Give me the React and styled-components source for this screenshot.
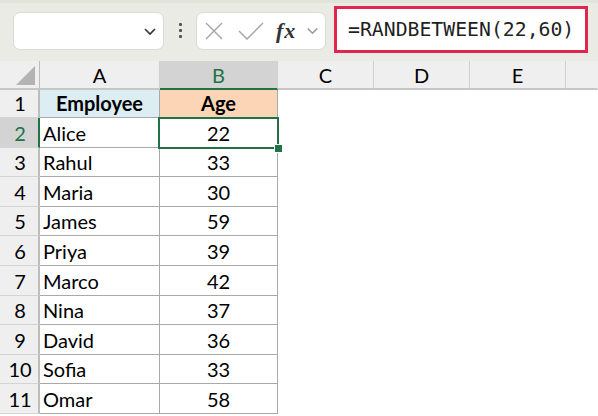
import React from 'react'
import styled, { createGlobalStyle } from 'styled-components'

const GlobalStyle = createGlobalStyle`
  html, body {
    margin: 0;
    padding: 0;
    background: #ffffff;
  }
  body {
    width: 598px;
    height: 416px;
    overflow: hidden;
  }
`

const GREEN = '#217346'

const Page = styled.div`
  width: 598px;
  height: 416px;
  display: flex;
  flex-direction: column;
  background: #ffffff;
  font-family: Lato, 'Liberation Sans', sans-serif;
`

const Toolbar = styled.div`
  height: 61px;
  box-sizing: border-box;
  background: #e9ebe4;
  border-top: 3px solid #e2e4dc;
  display: flex;
  align-items: center;
  padding: 0 10px 0 13px;
`

const NameBox = styled.div`
  width: 151px;
  height: 38px;
  box-sizing: border-box;
  margin-top: -3px;
  background: #ffffff;
  border: 1px solid #d9dbd4;
  border-radius: 7px;
  display: flex;
  align-items: center;
  justify-content: flex-end;
  padding-right: 6px;
`

const Dots = styled.div`
  width: 32px;
  display: flex;
  flex-direction: column;
  align-items: center;
  gap: 3px;
  margin-top: -3px;

  & span {
    width: 3px;
    height: 3px;
    border-radius: 1px;
    background: #555;
  }
`

const FxBox = styled.div`
  width: 130px;
  height: 38px;
  box-sizing: border-box;
  margin-top: -3px;
  background: #ffffff;
  border: 1px solid #d9dbd4;
  border-radius: 7px;
  display: flex;
  align-items: center;
  padding-left: 7px;
  gap: 14px;
`

const Fx = styled.span`
  font-family: 'Liberation Serif', serif;
  font-style: italic;
  font-weight: bold;
  font-size: 22px;
  color: #333;
  margin-left: -2px;
  margin-right: -4px;
  letter-spacing: 1px;
`

const FormulaBox = styled.div`
  flex: 1;
  height: 47px;
  box-sizing: border-box;
  margin-left: 8px;
  margin-top: -5px;
  background: #ffffff;
  border: 3px solid #e0264f;
  display: flex;
  align-items: center;
  padding-left: 11px;
  font-family: 'DejaVu Sans Mono', 'Liberation Mono', monospace;
  font-size: 19.8px;
  color: #1f1f1f;
`

const Sheet = styled.div`
  flex: 1;
  display: grid;
  grid-template-columns: 40px 120px 118px 96px 96px 96px 1fr;
  grid-template-rows: 29px 28px repeat(10, 29.6px);
  background: #ffffff;
`

const Corner = styled.div`
  background: #efefef;
  border-right: 1px solid #bdbdbd;
  border-bottom: 2px solid #c6c6c6;
  display: flex;
  align-items: flex-end;
  justify-content: flex-end;
  padding: 0 4px 3px 0;
`

const ColHeader = styled.div`
  background: ${({ active }) => (active ? '#d3d3d3' : '#efefef')};
  border-right: 1px solid ${({ last }) => (last ? 'transparent' : '#d0d0d0')};
  border-bottom: 2px solid ${({ active }) => (active ? GREEN : '#c6c6c6')};
  color: ${({ active }) => (active ? GREEN : '#000')};
  font-size: 20px;
  display: flex;
  align-items: center;
  justify-content: center;
  padding-top: 1px;
`

const RowHeader = styled.div`
  background: ${({ active }) => (active ? '#d3d3d3' : '#efefef')};
  border-right: 2px solid ${({ active }) => (active ? GREEN : '#bdbdbd')};
  border-bottom: 1px solid #d4d4d4;
  color: ${({ active }) => (active ? GREEN : '#000')};
  font-size: 20px;
  display: flex;
  align-items: flex-end;
  justify-content: center;
  padding: 0 0 2px 2px;
`

const Cell = styled.div`
  position: relative;
  z-index: ${({ selected }) => (selected ? 2 : 0)};
  background: ${({ fill }) => fill || '#ffffff'};
  border-right: 1px solid ${({ table }) => (table ? '#a9a9a9' : 'transparent')};
  border-bottom: 1px solid ${({ table }) => (table ? '#a9a9a9' : 'transparent')};
  font-size: 20px;
  font-weight: ${({ bold }) => (bold ? 700 : 400)};
  color: #000;
  display: flex;
  align-items: flex-end;
  justify-content: ${({ center }) => (center ? 'center' : 'flex-start')};
  padding: ${({ center }) => (center ? '0 0 2px 0' : '0 0 2px 3px')};
`

const Selection = styled.div`
  position: absolute;
  left: -2px;
  top: -1px;
  right: -2px;
  bottom: -2px;
  border: 2px solid ${GREEN};
  pointer-events: none;
`

const FillHandle = styled.div`
  position: absolute;
  right: -6px;
  bottom: -6px;
  width: 7px;
  height: 7px;
  background: ${GREEN};
  border: 1px solid #ffffff;
`

const Chevron = ({ color = '#333', size = 14 }) => (
  <svg width={size} height={size} viewBox="0 0 14 14">
    <path d="M2 5 L7 10 L12 5" fill="none" stroke={color} strokeWidth="1.6" />
  </svg>
)

const CrossIcon = () => (
  <svg width="20" height="20" viewBox="0 0 20 20">
    <path d="M2 2 L18 18 M18 2 L2 18" stroke="#a3a3a3" strokeWidth="1.4" fill="none" />
  </svg>
)

const CheckIcon = () => (
  <svg width="26" height="20" viewBox="0 0 26 20">
    <path d="M1 10 L9 18 L25 2" stroke="#a3a3a3" strokeWidth="1.4" fill="none" />
  </svg>
)

const CornerTriangle = () => (
  <svg width="19" height="19" viewBox="0 0 19 19">
    <polygon points="19,0 19,19 0,19" fill="#b3b3b3" />
  </svg>
)

const rows = [
  ['Alice', 22],
  ['Rahul', 33],
  ['Maria', 30],
  ['James', 59],
  ['Priya', 39],
  ['Marco', 42],
  ['Nina', 37],
  ['David', 36],
  ['Sofia', 33],
  ['Omar', 58],
]

const columns = ['A', 'B', 'C', 'D', 'E', '']

const App = () => (
  <Page>
    <GlobalStyle />
    <Toolbar>
      <NameBox>
        <Chevron />
      </NameBox>
      <Dots>
        <span />
        <span />
        <span />
      </Dots>
      <FxBox>
        <CrossIcon />
        <CheckIcon />
        <Fx>fx</Fx>
        <Chevron color="#9a9a9a" size={13} />
      </FxBox>
      <FormulaBox>=RANDBETWEEN(22,60)</FormulaBox>
    </Toolbar>
    <Sheet>
      <Corner>
        <CornerTriangle />
      </Corner>
      {columns.map((c, i) => (
        <ColHeader key={i} active={c === 'B'} last={i === columns.length - 1}>
          {c}
        </ColHeader>
      ))}

      <RowHeader>1</RowHeader>
      <Cell table bold center fill="#dcedf3">
        Employee
      </Cell>
      <Cell table bold center fill="#fbd5b6">
        Age
      </Cell>
      <Cell />
      <Cell />
      <Cell />
      <Cell />

      {rows.map(([name, age], i) => (
        <React.Fragment key={name + i}>
          <RowHeader active={i === 0}>{i + 2}</RowHeader>
          <Cell table>{name}</Cell>
          <Cell table center selected={i === 0}>
            {age}
            {i === 0 && (
              <Selection>
                <FillHandle />
              </Selection>
            )}
          </Cell>
          <Cell />
          <Cell />
          <Cell />
          <Cell />
        </React.Fragment>
      ))}
    </Sheet>
  </Page>
)

export default App
